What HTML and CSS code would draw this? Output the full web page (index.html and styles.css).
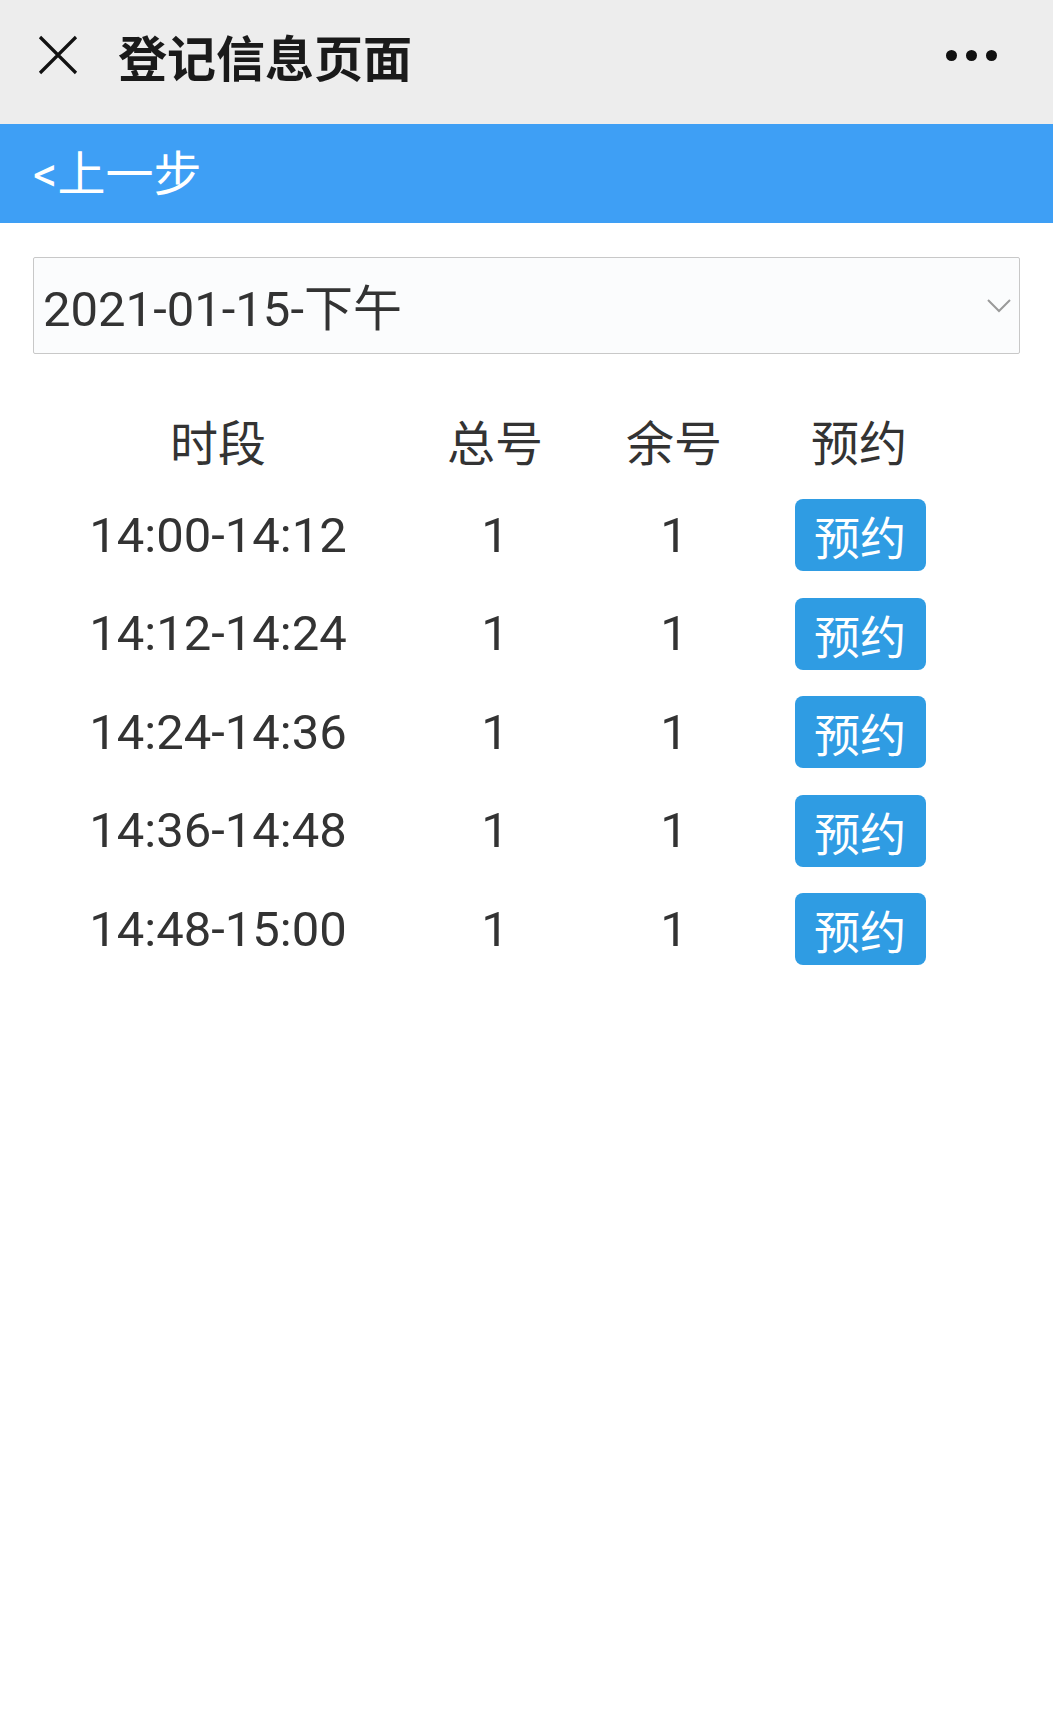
FILE: index.html
```html
<!DOCTYPE html>
<html lang="zh-CN">
<head>
    <meta charset="UTF-8">
    <meta name="viewport" content="width=device-width, initial-scale=1.0">
    <title>登记信息页面</title>
    <link rel="stylesheet" href="styles.css">
</head>
<body>

<div class="topbar">
    <svg class="close-icon" width="40" height="40" viewBox="0 0 40 40">
        <path d="M2 2 L38 38 M38 2 L2 38" stroke="#111" stroke-width="3.2" fill="none"/>
    </svg>
    <div class="page-title">登记信息页面</div>
    <div class="more">
        <span class="dot"></span><span class="dot"></span><span class="dot"></span>
    </div>
</div>

<div class="backbar">
    <a class="back" href="#">&lt;上一步</a>
</div>

<div class="content">
    <div class="select-wrap">
        <select id="day" name="day">
            <option value="2021-01-15-pm">2021-01-15-下午</option>
        </select>
        <svg class="chevron" width="24" height="14" viewBox="0 0 24 14">
            <path d="M1 1 L12 12 L23 1" stroke="#9a9a9a" stroke-width="2" fill="none"/>
        </svg>
    </div>

    <table class="slots">
        <colgroup>
            <col class="c-time">
            <col class="c-total">
            <col class="c-left">
            <col class="c-book">
        </colgroup>
        <thead>
            <tr>
                <th>时段</th>
                <th>总号</th>
                <th>余号</th>
                <th>预约</th>
            </tr>
        </thead>
        <tbody id="slotRows">
            <tr><td>14:00-14:12</td><td>1</td><td>1</td><td><button class="book-btn">预约</button></td></tr>
            <tr><td>14:12-14:24</td><td>1</td><td>1</td><td><button class="book-btn">预约</button></td></tr>
            <tr><td>14:24-14:36</td><td>1</td><td>1</td><td><button class="book-btn">预约</button></td></tr>
            <tr><td>14:36-14:48</td><td>1</td><td>1</td><td><button class="book-btn">预约</button></td></tr>
            <tr><td>14:48-15:00</td><td>1</td><td>1</td><td><button class="book-btn">预约</button></td></tr>
        </tbody>
    </table>
</div>

</body>
</html>
```

FILE: styles.css
```css
body {
    font-family: Roboto, "Noto Sans CJK SC", sans-serif;
    margin: 0;
    padding: 0;
    background-color: #fff;
    color: #333;
    height: 1736px;
}
.topbar {
    height: 124px;
    box-sizing: border-box;
    padding-bottom: 14px;
    background-color: #ededed;
    display: flex;
    align-items: center;
}
.close-icon {
    margin-left: 38px;
    flex-shrink: 0;
}
.page-title {
    margin-left: 40px;
    font-size: 49px;
    font-weight: 700;
    color: #1a1a1a;
    flex: 1;
}
.more {
    display: flex;
    gap: 9px;
    margin-right: 56px;
}
.dot {
    width: 11px;
    height: 11px;
    border-radius: 50%;
    background-color: #111;
}
.backbar {
    height: 99px;
    box-sizing: border-box;
    padding: 0 0 8px 33px;
    background-color: #3e9ff5;
    display: flex;
    align-items: center;
}
.back {
    color: #fff;
    font-size: 48px;
    text-decoration: none;
}
.content {
    padding: 34px 33px 0;
}
.select-wrap {
    position: relative;
}
select {
    width: 100%;
    height: 97px;
    padding: 8px 0 0 9px;
    font-family: Roboto, "Noto Sans CJK SC", sans-serif;
    font-size: 49px;
    color: #333;
    background-color: #fbfcfd;
    border: 1px solid #c8c8c8;
    border-radius: 2px;
    box-sizing: border-box;
    appearance: none;
    -webkit-appearance: none;
}
.chevron {
    position: absolute;
    right: 9px;
    top: 42px;
    pointer-events: none;
}
.slots {
    margin: 39px 0 0 7px;
    border-collapse: collapse;
    table-layout: fixed;
    width: 924px;
}
.c-time { width: 356px; }
.c-total { width: 198px; }
.c-left { width: 160px; }
.c-book { width: 210px; }
.slots th,
.slots td {
    padding: 0;
    text-align: center;
    font-size: 48px;
    font-weight: normal;
    color: #333;
}
.slots td {
    font-size: 49px;
}
.slots th {
    height: 93px;
}
.slots td {
    height: 98.5px;
}
.book-btn {
    width: 131px;
    height: 72px;
    padding: 0;
    margin-left: 2px;
    border: none;
    border-radius: 8px;
    background-color: #2f9ce3;
    color: #fff;
    font-family: Roboto, "Noto Sans CJK SC", sans-serif;
    font-size: 46px;
    cursor: pointer;
}
```
